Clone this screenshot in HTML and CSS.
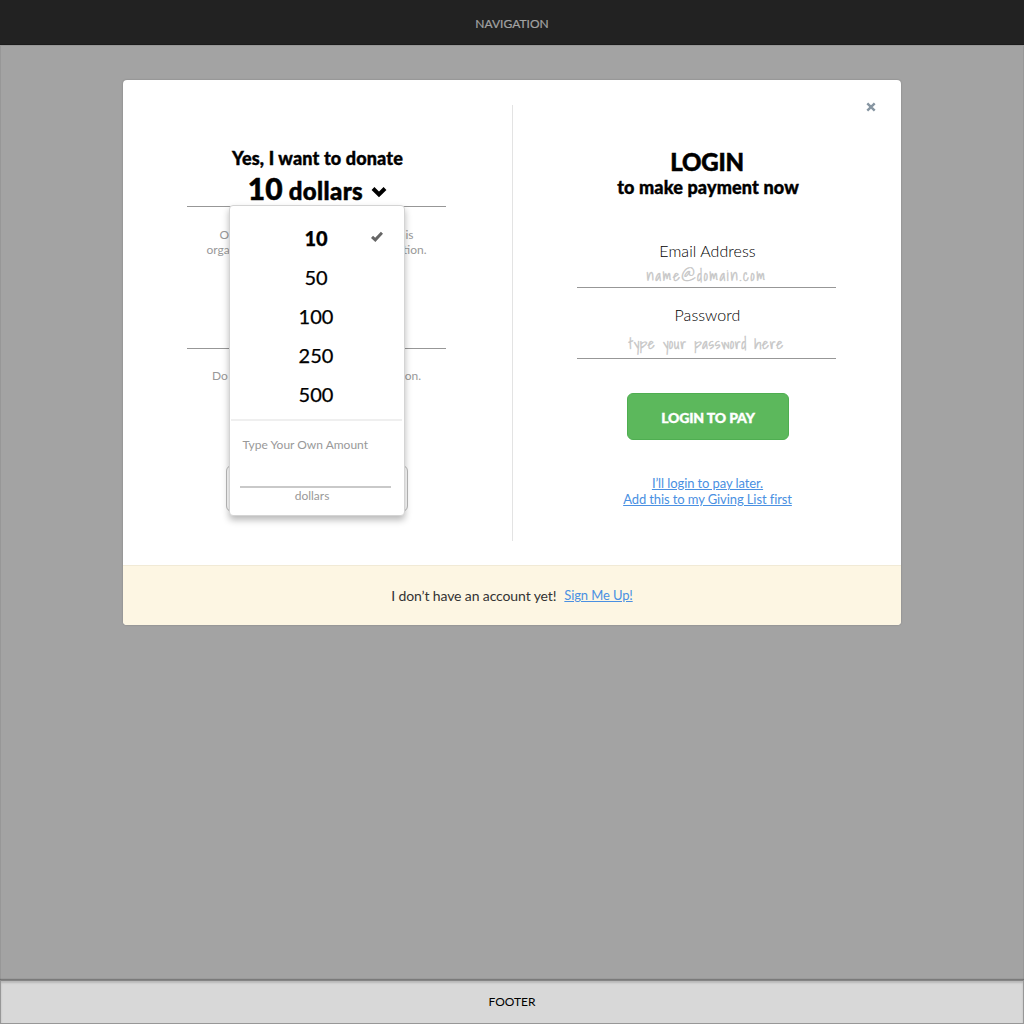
FILE: index.html
```html
<!DOCTYPE html>
<html lang="en">
<head>
<meta charset="utf-8">
<title>Donate</title>
<link rel="stylesheet" href="styles.css">
</head>
<body>
<header class="nav"><span>NAVIGATION</span></header>
<main class="stage">
  <section class="modal">
    <div class="panels">
      <div class="panel donate">
        <h2 class="lead"><span>Yes, I want to donate</span></h2>
        <div class="picker">
          <span class="picker-num">10</span><span class="picker-unit">dollars</span>
          <svg class="chevron" width="16" height="12" viewBox="0 0 16 12"><path d="M2 2.5 8 8.5 14 2.5" fill="none" stroke="#000" stroke-width="4"/></svg>
          <div class="menu">
            <ul class="amounts">
              <li class="selected"><span>10</span>
                <svg class="check" width="12" height="11" viewBox="0 0 12 11"><path d="M1 5.8 4.3 8.8 11 1.7" fill="none" stroke="#666" stroke-width="3"/></svg>
              </li>
              <li>50</li>
              <li>100</li>
              <li>250</li>
              <li>500</li>
            </ul>
            <div class="custom">
              <label class="custom-label">Type Your Own Amount</label>
              <div class="custom-line"></div>
              <div class="custom-unit">dollars</div>
            </div>
          </div>
        </div>
        <div class="note note-one">
          <p class="line-a"><span>O</span><span>his</span></p>
          <p class="line-b"><span>orga</span><span>ation.</span></p>
        </div>
        <div class="rule"></div>
        <p class="note line-c"><span>Do</span><span>tion.</span></p>
        <div class="ghost"></div>
      </div>
      <div class="divider"></div>
      <div class="panel login">
        <svg class="close" width="10" height="10" viewBox="0 0 10 10"><path d="M1.3 1.3 8.7 8.7M8.7 1.3 1.3 8.7" fill="none" stroke="#8796a2" stroke-width="2.4"/></svg>
        <h1 class="title"><span>LOGIN</span></h1>
        <h2 class="subtitle"><span>to make payment now</span></h2>
        <label class="label"><span>Email Address</span></label>
        <div class="field field-email"><span>name@domain.com</span></div>
        <label class="label label-pass"><span>Password</span></label>
        <div class="field field-pass"><span>type your password here</span></div>
        <button class="pay"><span>LOGIN TO PAY</span></button>
        <div class="links">
          <a href="#" class="later">I’ll login to pay later.</a>
          <a href="#" class="giving">Add this to my Giving List first</a>
        </div>
      </div>
    </div>
    <div class="signup"><span class="ask">I don’t have an account yet!</span><a href="#">Sign Me Up!</a></div>
  </section>
</main>
<footer class="footer"><span>FOOTER</span></footer>
</body>
</html>
```
FILE: styles.css
```css
* { box-sizing: border-box; }
body {
  margin: 0;
  height: 1024px;
  display: flex;
  flex-direction: column;
  font-family: Lato, "Liberation Sans", sans-serif;
  color: #000;
  overflow: hidden;
}
h1, h2, p, ul { margin: 0; padding: 0; }
.nav {
  height: 45px;
  flex: none;
  background: #222;
  border-bottom: 1px solid #1b1b1b;
  color: #a2a2a2;
  font-size: 12px;
  -webkit-text-stroke: .2px #a2a2a2;
  line-height: 47px;
  text-align: center;
}
.stage {
  flex: 1;
  background: #a3a3a3;
  border: 1px solid #979797;
  border-bottom: 0;
  padding-top: 34px;
}
.modal {
  width: 778px;
  height: 545px;
  margin: 0 auto;
  background: #fff;
  border-radius: 4px;
  box-shadow: 0 0 2px rgba(0, 0, 0, .25);
  overflow: hidden;
}
.panels { height: 485px; display: flex; }
.panel { display: flex; flex-direction: column; align-items: center; }
.donate { width: 386px; margin-right: 3px; padding-top: 67px; }
.lead {
  font-size: 18px;
  line-height: 22px;
  font-weight: 900;
  white-space: nowrap;
  padding-left: 3px;
  letter-spacing: .15px;
  -webkit-text-stroke: .4px #000;
}
.picker {
  position: relative;
  width: 259px;
  height: 38px;
  border-bottom: 1px solid #979797;
  display: flex;
  align-items: baseline;
  justify-content: center;
  font-weight: 900;
  line-height: 38px;
  padding-left: 3px;
}
.picker-num { font-size: 30px; margin-right: 6px; -webkit-text-stroke: .5px #000; }
.picker-unit { font-size: 24px; margin-right: 8px; letter-spacing: .4px; -webkit-text-stroke: .5px #000; }
.chevron { align-self: flex-start; margin-top: 17px; }
.menu {
  position: absolute;
  left: 42px;
  top: 36px;
  z-index: 2;
  width: 176px;
  height: 311px;
  background: #fff;
  border: 1px solid #d4d4d4;
  border-radius: 4px;
  box-shadow: 0 4px 7px rgba(0, 0, 0, .28);
  font-weight: 400;
}
.amounts {
  height: 215px;
  margin: 0 2px 0 1px;
  padding-top: 13px;
  border-bottom: 2px solid #efefef;
  list-style: none;
  font-size: 20px;
  line-height: 39px;
  text-align: center;
  -webkit-text-stroke: .25px #000;
}
.amounts li { height: 39px; position: relative; }
.amounts .selected { font-weight: 900; }
.check { position: absolute; right: 19px; top: 12px; }
.custom { padding: 15px 13px 0 10px; font-size: 12px; line-height: 18px; color: #999; }
.custom-label { display: block; padding-left: 3px; }
.custom-line { height: 34px; border-bottom: 2px solid #c9c9c9; }
.custom-unit { text-align: center; padding-right: 6px; line-height: 16px; }
.note { color: #999; font-size: 12px; line-height: 15px; }
.note-one { margin-top: 20px; padding-left: 1px; }
.note-one p { margin: 0 auto; }
.line-a, .line-b, .line-c { display: flex; justify-content: space-between; }
.line-a { width: 194px; }
.line-b { width: 220px; }
.rule { width: 259px; height: 1px; margin-top: 91px; background: #979797; }
.line-c { width: 209px; margin: 19px 0 0 1px; }
.ghost { width: 182px; height: 47px; margin: 82px 0 0 1px; border: 1px solid #bbb; border-radius: 6px; }
.divider { width: 1px; height: 436px; margin-top: 25px; background: #e3e3e3; }
.login { width: 388px; padding-top: 22px; }
.close { align-self: flex-end; margin-right: 25px; flex: none; }
.title {
  margin-top: 35px;
  font-size: 24px;
  line-height: 30px;
  font-weight: 900;
  letter-spacing: -.2px;
  -webkit-text-stroke: .5px #000;
}
.subtitle {
  margin-top: -3px;
  font-size: 18px;
  line-height: 26px;
  font-weight: 900;
  letter-spacing: .15px;
  padding-left: 2px;
  -webkit-text-stroke: .4px #000;
}
.label { margin-top: 41px; padding-left: 1px; font-size: 16px; line-height: 20px; font-weight: 300; color: #000; letter-spacing: .05px; }
.field {
  width: 259px;
  margin-right: 1px;
  border-bottom: 1px solid #979797;
  color: #c6c6c6;
  font-family: "Shadows Into Light", "Nothing You Could Do", Lato, cursive;
  text-align: center;
  white-space: nowrap;
  -webkit-text-stroke: .4px #c6c6c6;
}
.field-email { height: 27px; font-size: 15px; line-height: 28px; letter-spacing: 1.65px; }
.label-pass { margin-top: 17px; }
.field-pass { height: 34px; font-size: 15px; line-height: 36px; letter-spacing: .7px; }
.pay {
  width: 162px;
  height: 47px;
  margin: 34px 0 0 2px;
  padding: 1px 0 0;
  border: 1px solid #4fae51;
  border-radius: 6px;
  background: #5cb85c;
  color: #fff;
  font: 900 14px Lato, sans-serif;
  letter-spacing: -.15px;
  -webkit-text-stroke: .4px #fff;
}
.links {
  margin-top: 35px;
  padding-left: 1px;
  display: flex;
  flex-direction: column;
  align-items: center;
  font-size: 13px;
  line-height: 16px;
  letter-spacing: -.1px;
}
a { color: #4a90e2; text-decoration: underline; }
.signup {
  height: 60px;
  background: #fdf6e3;
  border-top: 1px solid #f1ead6;
  display: flex;
  justify-content: center;
  gap: 8px;
  font-size: 13px;
  line-height: 58px;
  letter-spacing: -.12px;
  color: #333;
}
.ask { font-size: 14px; line-height: 60px; }
.footer {
  height: 44px;
  flex: none;
  background: #d8d8d8;
  border: 1px solid #979797;
  border-top: 1px solid #858585;
  box-shadow: inset 0 2px 2px rgba(0, 0, 0, .15), 0 -1px 1px rgba(0, 0, 0, .25);
  font-size: 12px;
  line-height: 42px;
  text-align: center;
}
```
